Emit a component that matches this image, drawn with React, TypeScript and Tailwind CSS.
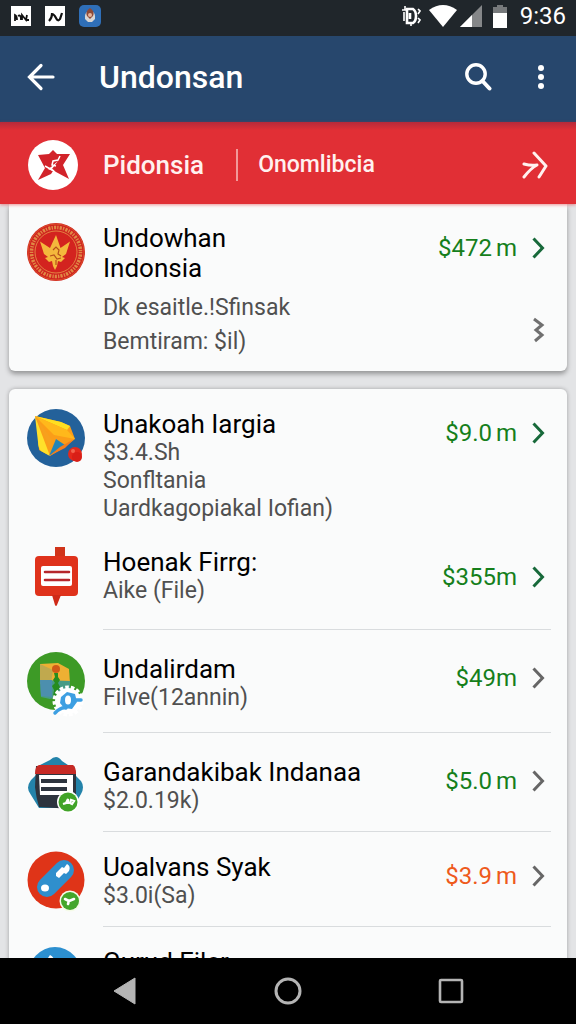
import type { ReactNode } from 'react';

type Row = {
  id: string;
  title: string;
  lines: string[];
  amount: string;
  unitGap?: boolean;
  tone: string;
  arrow: string;
  spacing: string;
  amountHeight: string;
  icon: ReactNode;
};

function RowIcon({ children }: { children: ReactNode }) {
  return (
    <svg viewBox="0 0 60 58" className="h-[58px] w-[60px] shrink-0 overflow-visible" aria-hidden="true">
      {children}
    </svg>
  );
}

function EmblemIcon() {
  return (
    <RowIcon>
      <circle cx="29" cy="29" r="29" fill="#cf2420" />
      <circle cx="29" cy="29" r="28" fill="none" stroke="#dd5a2c" strokeWidth="0.8" />
      <circle cx="29" cy="29" r="24.500" fill="none" stroke="#e08a45" strokeWidth="3.600" strokeDasharray="1.3 1.2 2.2 1.1" />
      <circle cx="29" cy="29" r="21" fill="#d3231f" stroke="#e58a45" strokeWidth="0.9" />
      <path d="M29 12l4.500 13 9.500-6.500-4 12.500-4 3 3 1-4 4-3-1-1 5-2 4-2-4-1-5-3 1-4-4 3-1-4-3-4-12.500 10 6.500z" fill="#f4b83c" />
      <path d="M26 27l3-3 3 3-1 4 3 2M23 33l4-1 3 4 4-1M29 37v5" fill="none" stroke="#b5501c" strokeWidth="1.200" />
    </RowIcon>
  );
}

function KiteIcon() {
  return (
    <RowIcon>
      <circle cx="29" cy="29" r="29" fill="#23619a" />
      <path d="M8 7l26 6 9 4 5 13-10 8-15 9-11-6-1-20z" fill="#fb9d18" />
      <path d="M8 7l15 40-9-5q-3-3-3-9z" fill="#ffe02a" />
      <path d="M8 7l26 6 9 4-3 4z" fill="#ffdf20" />
      <path d="M8 7l32 14 8 9-21-4z" fill="#ffb81b" />
      <path d="M8 7l17 24-2 8z" fill="#f7a01d" />
      <path d="M29 30l-7 17 16-11z" fill="#2485b7" />
      <path d="M22 47l11-9 14-8-9 9z" fill="#f67c1b" />
      <circle cx="48" cy="45" r="7" fill="#e3291c" />
      <circle cx="50" cy="48" r="5" fill="#d91f17" />
      <circle cx="46" cy="42" r="2" fill="#f2644e" />
    </RowIcon>
  );
}

function SignIcon() {
  return (
    <RowIcon>
      <path d="M28 0h10v10H28z" fill="#d0341a" />
      <rect x="8" y="9" width="43" height="40" rx="4" fill="#df321b" />
      <path d="M25 48h9l-4 10q-1 2-2 0z" fill="#cf2a18" />
      <rect x="14" y="19" width="31" height="20" rx="2" fill="#fff" />
      <path d="M18 25h24M18 33h24" stroke="#b6272c" strokeWidth="2.600" strokeLinecap="round" />
    </RowIcon>
  );
}

function MapIcon() {
  return (
    <RowIcon>
      <circle cx="29" cy="27" r="29" fill="#3d9a26" />
      <path d="M13 10l18-1 11 6 1 14-30 1z" fill="#eeb033" />
      <path d="M13 10l13 6-2 14H13z" fill="#c0a94e" />
      <path d="M13 26l30 1v12l-20 6-9-2z" fill="#479b86" />
      <path d="M13 26h12v17l-11-1z" fill="#4c8fae" />
      <circle cx="29" cy="15" r="4" fill="#d05a18" />
      <path d="M27 19h4v4l2 3-2 3 2 4-2 4 1 5h-6l1-6-2-4 3-3-2-3 2-3z" fill="#258c1f" />
      <circle cx="41" cy="47" r="13.500" fill="none" stroke="#fff" strokeWidth="4" strokeDasharray="3.5 2" />
      <circle cx="41" cy="47" r="13" fill="#fff" />
      <path d="M34 43l6-5 8 2 2 8-5 7-8-1-4-5z" fill="#3d9fe2" />
      <ellipse cx="41" cy="46" rx="3" ry="4.500" fill="#fff" />
      <path d="M39 54q-5-1-11 5M49 46h5" fill="none" stroke="#3d9fe2" strokeWidth="3.500" strokeLinecap="round" />
    </RowIcon>
  );
}

function NotesIcon() {
  return (
    <RowIcon>
      <path d="M29 0q3 0 6 4l9 6 5 9 5 5q4 6 0 13l-8 14H12L4 38q-6-7 0-15l5-5 4-10 10-5q3-3 6-3z" fill="#2383aa" />
      <path d="M9 9h38l2 7v30l-3 6-34-2q-3-10-4-20z" fill="#2d343e" />
      <path d="M12 8h34q3 2 3 9H8q0-8 4-9z" fill="#c62a25" />
      <path d="M12 18h34v20H13z" fill="#fff" />
      <path d="M14 24h26M14 32h26" stroke="#2d343e" strokeWidth="4" />
      <circle cx="41" cy="45" r="11" fill="#fff" />
      <circle cx="41" cy="45" r="9.500" fill="#41a428" />
      <path d="M36 47l3-1 2-4v5M43 46l1-3 3 1-2 3z" fill="none" stroke="#fff" strokeWidth="2.200" />
    </RowIcon>
  );
}

function CapsuleIcon() {
  return (
    <RowIcon>
      <circle cx="29" cy="28" r="28.500" fill="#df3418" />
      <path d="M20 35l17-17" stroke="#2f8fcd" strokeWidth="20" strokeLinecap="round" />
      <path d="M29 21l6-6 2 1 3-4q4 2 2 7l-3 3-2-1-5 5-3-2z" fill="#fff" />
      <ellipse cx="18" cy="36" rx="4" ry="3.500" fill="#fff" />
      <circle cx="43" cy="49" r="10.500" fill="#f5fbe8" />
      <circle cx="43" cy="49" r="9" fill="#44a62b" />
      <path d="M38 47l4 2 5-2M42 49l-1 3" fill="none" stroke="#fff" strokeWidth="2.600" strokeLinecap="round" />
    </RowIcon>
  );
}

function BlueIcon() {
  return (
    <RowIcon>
      <ellipse cx="28" cy="29" rx="27" ry="29" fill="#2c8fcf" />
      <path d="M19 14l4-6q4 2 4 6z" fill="#fff" />
    </RowIcon>
  );
}

function Chevron({ className }: { className: string }) {
  return (
    <svg viewBox="0 0 24 24" className={className} fill="none" stroke="currentColor" strokeWidth="3" aria-hidden="true">
      <path d="M6.500 2.500L15.500 12l-9 9.500" />
    </svg>
  );
}

const rows: Row[] = [
  {
    id: 'largia',
    title: 'Unakoah Iargia',
    lines: ['$3.4.Sh', 'Sonfltania', 'Uardkagopiakal Iofian)'],
    amount: '$9.0',
    unitGap: true,
    tone: 'text-[#157f1b]',
    arrow: 'text-[#17693a]',
    spacing: 'pt-5',
    amountHeight: 'h-12',
    icon: <KiteIcon />,
  },
  {
    id: 'firrg',
    title: 'Hoenak Firrg:',
    lines: ['Aike (File)'],
    amount: '$355',
    tone: 'text-[#157f1b]',
    arrow: 'text-[#17693a]',
    spacing: 'pt-6 pb-[22px]',
    amountHeight: 'h-[60px]',
    icon: <SignIcon />,
  },
  {
    id: 'undalirdam',
    title: 'Undalirdam',
    lines: ['Filve(12annin)'],
    amount: '$49',
    tone: 'text-[#157f1b]',
    arrow: 'text-[#666]',
    spacing: 'pt-6 pb-5',
    amountHeight: 'h-12',
    icon: <MapIcon />,
  },
  {
    id: 'garandakibak',
    title: 'Garandakibak Indanaa',
    lines: ['$2.0.19k)'],
    amount: '$5.0',
    unitGap: true,
    tone: 'text-[#157f1b]',
    arrow: 'text-[#666]',
    spacing: 'pt-6 pb-4',
    amountHeight: 'h-12',
    icon: <NotesIcon />,
  },
  {
    id: 'syak',
    title: 'Uoalvans Syak',
    lines: ['$3.0i(Sa)'],
    amount: '$3.9',
    unitGap: true,
    tone: 'text-[#ee5a1c]',
    arrow: 'text-[#666]',
    spacing: 'pt-5 pb-4',
    amountHeight: 'h-12',
    icon: <CapsuleIcon />,
  },
];

function ListRow({ row }: { row: Row }) {
  return (
    <a href={`#${row.id}`} className={`flex items-start gap-4 ${row.spacing}`}>
      {row.icon}
      <div className="min-w-0 flex-1 whitespace-nowrap">
        <h2 className="text-[26px] leading-[30px] text-black">{row.title}</h2>
        {row.lines.map((line) => (
          <p key={line} className="text-[23px] leading-7 text-[#505050]">
            {line}
          </p>
        ))}
      </div>
      <div className={`flex items-center gap-[10px] ${row.amountHeight}`}>
        <span className={`text-2xl ${row.tone}`}>
          {row.amount}
          <span className={row.unitGap ? 'ml-1' : ''}>m</span>
        </span>
        <Chevron className={`size-6 ${row.arrow}`} />
      </div>
    </a>
  );
}

function StatusBar() {
  return (
    <div className="flex h-9 shrink-0 items-center bg-[#20262b] pr-[10px] pb-1 pl-[11px] text-white">
      <div className="flex flex-1 items-center gap-[14px]">
        <svg viewBox="0 0 20 20" className="size-5" aria-hidden="true">
          <path d="M0 0h20v20H0z" fill="#fff" />
          <path d="M4 15V9q2 1 2 5M7 10q3-2 3 4M11 14V9l4 5 1-5M15 14h3" fill="none" stroke="#111" strokeWidth="1.800" />
        </svg>
        <svg viewBox="0 0 20 20" className="size-5" aria-hidden="true">
          <path d="M0 0h20v20H0z" fill="#fff" />
          <path d="M4 15q3-3 3-7 2 0 4 4t4 1l2-6" fill="none" stroke="#111" strokeWidth="2.200" />
        </svg>
        <svg viewBox="0 0 22 22" className="size-[22px]" aria-hidden="true">
          <rect width="22" height="22" rx="5" fill="#2f6fb8" />
          <path d="M11 4q6 4 5 10l-3 3H9l-3-3Q5 8 11 4z" fill="#d9d6d4" />
          <path d="M11 3q5 3 3 8l-3 3-3-3q-2-5 3-8z" fill="#8d4a38" />
          <circle cx="11" cy="10" r="2" fill="#e8b49a" />
        </svg>
      </div>
      <div className="flex items-center">
        <svg viewBox="0 0 20 24" className="mr-2 h-6 w-5" fill="none" stroke="#fff" aria-hidden="true">
          <path d="M6 5h6q3 2 3 7t-3 7H6zM9 9v6" strokeWidth="2.600" />
          <path d="M1 6h4M4 2v4M3 8v9M17 5l2 2-2 3M17 14l2 2-2 3M10 19v3" strokeWidth="1.600" />
        </svg>
        <svg viewBox="0 0 28 22" className="mr-[3px] h-[22px] w-7" aria-hidden="true">
          <path d="M0 5Q14-5 28 5L14 22z" fill="#fff" />
        </svg>
        <svg viewBox="0 0 22 22" className="mr-[11px] size-[22px]" aria-hidden="true">
          <path d="M22 0v22H0z" fill="#858789" />
          <path d="M12 10v12H0z" fill="#fff" />
        </svg>
        <svg viewBox="0 0 14 23" className="mr-[13px] h-[23px] w-[14px]" aria-hidden="true">
          <path d="M4 0h6v2h4v7H0V2h4z" fill="#777a7c" />
          <path d="M0 8h14v15H0z" fill="#fff" />
        </svg>
        <span className="text-2xl leading-none">9:36</span>
      </div>
    </div>
  );
}

export default function App() {
  return (
    <div className="flex h-screen flex-col overflow-hidden bg-[#e3e4e6] font-['Roboto',sans-serif]">
      <StatusBar />

      <header className="flex h-[86px] shrink-0 items-center bg-[#27476d] pr-4 pb-1 pl-[19px] text-white">
        <button type="button" aria-label="Back" className="mr-9 flex size-11 items-center justify-center">
          <svg viewBox="0 0 28 28" className="size-7" fill="none" stroke="currentColor" strokeWidth="3.200" strokeLinecap="round" aria-hidden="true">
            <path d="M26 14H3M14 2.500L2.500 14 14 25.500" />
          </svg>
        </button>
        <h1 className="flex-1 text-[32px] font-medium">Undonsan</h1>
        <button type="button" aria-label="Search" className="mr-[22px] flex size-11 items-center justify-center">
          <svg viewBox="0 0 28 28" className="size-7" fill="none" stroke="currentColor" strokeLinecap="round" aria-hidden="true">
            <circle cx="12" cy="11" r="9.200" strokeWidth="3.400" />
            <path d="M18.500 18l7 7.500" strokeWidth="4" />
          </svg>
        </button>
        <button type="button" aria-label="More options" className="flex h-11 w-[38px] items-center justify-center">
          <svg viewBox="0 0 6 26" className="h-[26px] w-[6px]" fill="currentColor" aria-hidden="true">
            <circle cx="3" cy="4" r="3" />
            <circle cx="3" cy="13" r="3" />
            <circle cx="3" cy="22" r="3" />
          </svg>
        </button>
      </header>

      <nav className="z-10 flex h-[82px] shrink-0 items-center bg-[#e12f35] bg-linear-to-b from-[#b52a3a] to-[#e12f35] to-10% pt-1 pr-7 pl-7 text-[#fff1ef] shadow-[0_1px_3px_rgba(225,47,53,0.5)]">
        <svg viewBox="0 0 50 50" className="mr-[25px] size-[50px]" aria-hidden="true">
          <circle cx="25" cy="25" r="25" fill="#fff" />
          <path d="M10 15l11-1 4-4 4 4 13 0-7 11 6 14-13-7-4-3 6-8-7 6-5 3z" fill="#d2232a" />
          <path d="M17 28l8 3-2 3-13 6z" fill="#d2232a" />
          <path d="M32 16l-2 4-5 1-1 4 4 1M17 26l9 5" fill="none" stroke="#fff" strokeWidth="1.500" />
        </svg>
        <a href="#pidonsia" className="text-[26px] font-medium">Pidonsia</a>
        <span className="mr-5 ml-8 h-8 w-[2px] bg-[#f29a9a]" />
        <a href="#onomlibcia" className="flex-1 text-[23px] font-medium">Onomlibcia</a>
        <button type="button" aria-label="Next">
          <svg viewBox="0 0 26 28" className="h-7 w-[26px]" fill="none" stroke="currentColor" strokeWidth="3" strokeLinecap="round" strokeLinejoin="round" aria-hidden="true">
            <path d="M12 2l12 13-7 11M2 13q7 2 13 1Q9 17 2 26" />
          </svg>
        </button>
      </nav>

      <main className="flex min-h-0 flex-1 flex-col gap-[18px] overflow-hidden px-[9px]">
        <section className="flex shrink-0 items-start gap-4 rounded-b-md bg-[#fafbfb] pt-[19px] pr-4 pb-3 pl-[18px] shadow-[0_3px_5px_rgba(0,0,0,0.35)]">
          <EmblemIcon />
          <div className="flex-1">
            <h2 className="text-[26px] leading-[30px] text-black">
              Undowhan
              <br />
              Indonsia
            </h2>
            <p className="mt-2 text-[23px] leading-[34px] whitespace-nowrap text-[#505050]">
              Dk esaitle.!Sfinsak
              <br />
              Bemtiram: $il)
            </p>
          </div>
          <div className="flex flex-col items-end gap-11">
            <a href="#undowhan" className="flex h-[50px] items-center gap-[10px] text-2xl text-[#157f1b]">
              <span>
                $472<span className="ml-1">m</span>
              </span>
              <Chevron className="size-6 text-[#17693a]" />
            </a>
            <button type="button" aria-label="Details" className="text-[#707070]">
              <svg viewBox="0 0 24 26" className="h-[26px] w-6" fill="none" stroke="currentColor" strokeWidth="3" aria-hidden="true">
                <path d="M7 2l8 6-6 5 6 5-7 6" />
              </svg>
            </button>
          </div>
        </section>

        <section className="flex-1 rounded-t-md bg-[#fafbfb] pr-4 pl-[18px] shadow-[0_0_4px_rgba(0,0,0,0.3)]">
          {rows.map((row, index) => (
            <div key={row.id}>
              <ListRow row={row} />
              {index > 0 && <hr className="ml-[76px] border-[#d9dcde]" />}
            </div>
          ))}
          <a href="#files" className="flex items-start gap-4 pt-5">
            <BlueIcon />
            <h2 className="text-[26px] leading-[30px] text-black">Gurud Filer</h2>
          </a>
        </section>
      </main>

      <footer className="z-10 flex h-[66px] shrink-0 items-center justify-center gap-[123px] bg-black text-[#b4b4b4]">
        <button type="button" aria-label="Back" className="flex w-10 justify-center">
          <svg viewBox="0 0 24 28" className="h-7 w-6" fill="currentColor" aria-hidden="true">
            <path d="M22 1v26L1 14z" stroke="currentColor" strokeLinejoin="round" />
          </svg>
        </button>
        <button type="button" aria-label="Home" className="flex w-10 justify-center">
          <svg viewBox="0 0 28 28" className="size-7" fill="none" stroke="currentColor" strokeWidth="3" aria-hidden="true">
            <circle cx="14" cy="14" r="12" />
          </svg>
        </button>
        <button type="button" aria-label="Recent apps" className="flex w-10 justify-center">
          <svg viewBox="0 0 26 26" className="size-[26px]" fill="none" stroke="currentColor" strokeWidth="2.600" aria-hidden="true">
            <rect x="2" y="2" width="22" height="22" rx="1" />
          </svg>
        </button>
      </footer>
    </div>
  );
}
